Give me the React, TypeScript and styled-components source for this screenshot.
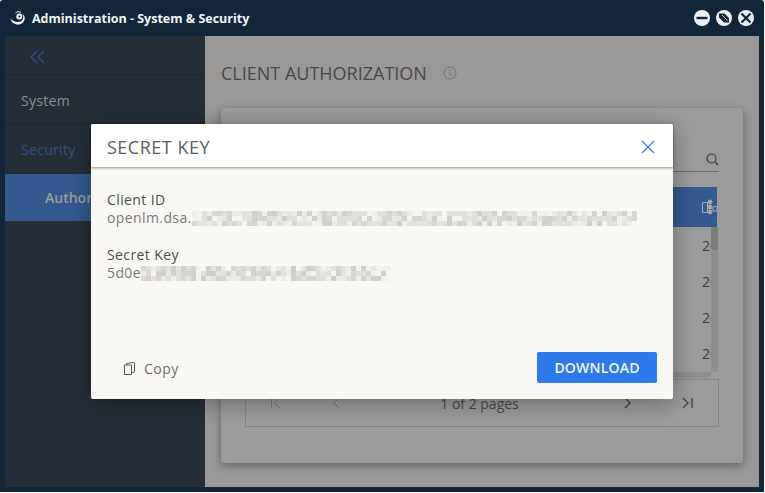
import styled, { createGlobalStyle } from 'styled-components'

const GlobalStyle = createGlobalStyle`
  html, body {
    margin: 0;
    padding: 0;
    background: #f4f4f4;
    overflow: hidden;
  }
  * { box-sizing: border-box; }
`

const Window = styled.div`
  position: relative;
  width: 764px;
  height: 492px;
  background: #12263a;
  border-radius: 3px 3px 0 0;
  padding: 0 5px 5px 5px;
  display: flex;
  flex-direction: column;
  font-family: 'Open Sans', sans-serif;
  overflow: hidden;
`

const TitleBar = styled.header`
  height: 36px;
  flex: none;
  display: flex;
  align-items: center;
  margin: 0 -5px;
  padding: 0 10px;
  color: #f3f5f7;
`

const Logo = styled.svg`
  width: 16px;
  height: 16px;
  margin-right: 6px;
`

const Title = styled.h1`
  margin: 0;
  flex: 1;
  font: 700 12.5px 'Open Sans', sans-serif;
`

const WinButtons = styled.div`
  display: flex;
  gap: 6px;
`

const WinButton = styled.svg`
  width: 16px;
  height: 16px;
`

const Body = styled.div`
  flex: 1;
  display: flex;
  min-height: 0;
`

const Sidebar = styled.nav`
  width: 200px;
  flex: none;
  background: #252e37;
  display: flex;
  flex-direction: column;
  font-size: 14px;
  letter-spacing: 0.3px;
`

const Collapse = styled.div`
  height: 39px;
  padding: 13px 0 0 24px;
  border-bottom: 1px solid #20272e;
`

const NavItem = styled.div<{ $active?: boolean }>`
  height: 49px;
  display: flex;
  align-items: center;
  padding: 2px 0 0 16px;
  color: ${p => (p.$active ? '#2f5185' : '#8b8f93')};
  border-bottom: 1px solid #1f262c;
`

const SubItem = styled.div`
  height: 47px;
  margin-top: 1px;
  display: flex;
  align-items: center;
  padding-left: 40px;
  background: #34598f;
  color: #9c9c9c;
  font-weight: 600;
  letter-spacing: 0;
`

const Content = styled.main`
  flex: 1;
  min-width: 0;
  background: #9b9997;
  padding: 24px 16px;
  display: flex;
  flex-direction: column;
`

const Heading = styled.h2`
  margin: 0 0 22px;
  height: 26px;
  flex: none;
  display: flex;
  align-items: center;
  gap: 16px;
  font-size: 18px;
  font-weight: 400;
  color: #46484b;
`

const Card = styled.section`
  height: 355px;
  flex: none;
  background: #9b9b9b;
  border-radius: 3px;
  box-shadow: 0 3px 10px rgba(0, 0, 0, 0.35);
  padding: 0 24px;
  display: flex;
  flex-direction: column;
`

const SearchRow = styled.div`
  height: 64px;
  flex: none;
  border-bottom: 1px solid #6f6f6f;
  display: flex;
  align-items: flex-end;
  justify-content: flex-end;
  padding-bottom: 5px;
`

const TableBox = styled.div`
  position: relative;
  height: 193px;
  flex: none;
  margin-top: 14px;
  padding: 1px 2px 0 0;
  overflow: hidden;
`

const Row = styled.div<{ $selected?: boolean }>`
  height: ${p => (p.$selected ? 40 : 36)}px;
  display: flex;
  align-items: center;
  justify-content: flex-end;
  font-size: 14px;
  color: #3f3f3f;
  padding-right: ${p => (p.$selected ? 0 : 5)}px;
  background: ${p => (p.$selected ? '#34598f' : 'transparent')};
`

const RowCell = styled.span`
  width: 10px;
  overflow: hidden;
  white-space: nowrap;
`

const VScroll = styled.div`
  position: absolute;
  right: 1px;
  top: 41px;
  width: 7px;
  height: 145px;
  background: #8f8f8f;
  border-radius: 3px;
`

const VThumb = styled.div`
  height: 23px;
  background: #7c7c7c;
  border-radius: 3px;
`

const HScroll = styled.div`
  position: absolute;
  left: 0;
  right: 8px;
  bottom: 1px;
  height: 6px;
  background: #8f8f8f;
  border-radius: 3px;
`

const Pager = styled.div`
  height: 48px;
  flex: none;
  position: relative;
  border: 1px solid #858585;
  display: flex;
  align-items: center;
  padding: 0 24px;
  gap: 49px;
  font-size: 14px;
`

const PagerText = styled.span`
  position: absolute;
  left: 0;
  right: 0;
  text-align: center;
  padding-right: 5px;
  color: #4a4a4a;
`

const PagerSpacer = styled.div`
  flex: 1;
`

const Modal = styled.div`
  position: absolute;
  left: 91px;
  top: 124px;
  width: 582px;
  height: 275px;
  background: #f9f8f4;
  border-radius: 2px;
  box-shadow: 0 4px 22px rgba(0, 0, 0, 0.32);
  display: flex;
  flex-direction: column;
`

const ModalHeader = styled.div`
  height: 43px;
  flex: none;
  background: #fff;
  border-radius: 2px 2px 0 0;
  box-shadow: 0 1px 3px rgba(0, 0, 0, 0.45);
  display: flex;
  align-items: center;
  justify-content: space-between;
  padding: 2px 18px 0 16px;
  font-size: 18px;
  letter-spacing: 0.5px;
  color: #5a5d61;
`

const ModalBody = styled.div`
  flex: 1;
  padding: 24px 16px 0;
  font-size: 14px;
  line-height: 18px;
  letter-spacing: 0.4px;
`

const Field = styled.div`
  margin-bottom: 19px;
`

const Label = styled.div`
  color: #4d4f52;
`

const Value = styled.div`
  display: flex;
  align-items: center;
  color: #77797b;
`

const Blur = styled.div`
  display: flex;
  flex-direction: column;
  filter: blur(0.5px);
`

const BlurRow = styled.div`
  display: flex;
`

const BlurCell = styled.i`
  width: 5px;
  height: 5px;
`

const ModalFooter = styled.div`
  height: 47px;
  flex: none;
  display: flex;
  align-items: flex-start;
  justify-content: space-between;
  padding: 0 16px 0 33px;
`

const CopyButton = styled.button`
  height: 32px;
  border: 0;
  background: none;
  padding: 0;
  display: flex;
  align-items: center;
  gap: 9px;
  font: 14px 'Open Sans', sans-serif;
  letter-spacing: 0.5px;
  color: #6b6d70;
`

const DownloadButton = styled.button`
  width: 120px;
  height: 31px;
  border: 0;
  border-radius: 2px;
  background: #2f7aeb;
  color: #f2f6fd;
  font: 600 14px 'Open Sans', sans-serif;
  letter-spacing: 0.2px;
`

const shades = ['#e6e4e0', '#d9d7d3', '#f0efeb', '#d2d0cc', '#eaeae7', '#dfe1e0', '#f5f4f0', '#d6d2ce', '#e2e0dc']

// pseudo random pixels so that the masked text does not look like a regular pattern
function pixel(i: number, row: number, seed: number) {
  const n = Math.sin(i * 12.9898 + row * 78.233 + seed * 37.719) * 43758.5453
  return shades[Math.floor((n - Math.floor(n)) * shades.length)]
}

function BlurStrip({ cells, seed }: { cells: number; seed: number }) {
  return (
    <Blur>
      {[0, 1, 2].map(row => (
        <BlurRow key={row}>
          {Array.from({ length: cells }, (_, i) => (
            <BlurCell key={i} style={{ background: pixel(i, row, seed) }} />
          ))}
        </BlurRow>
      ))}
    </Blur>
  )
}

export default function App() {
  return (
    <Window>
      <GlobalStyle />
      <TitleBar>
        <Logo viewBox="0 0 16 16">
          <path d="M.5 8.500C1 12 4 14.500 8 14.500c3.800 0 6.500-2.600 6.700-6 .1-2-.8-4-2.700-5 1.200 1.400 1.700 3.400 1 5.200-.7 2-2.700 3.300-5 3.300-3 0-5.800-1.300-7.500-3.500z" fill="#f3f5f7" />
          <circle cx="9.300" cy="6.600" r="3" fill="#f3f5f7" />
          <circle cx="9.300" cy="6.600" r="1" fill="#12263a" />
          <path d="M5.500 2.800C7 1.500 9.500 1.500 11 2.500" fill="none" stroke="#f3f5f7" />
        </Logo>
        <Title>Administration - System &amp; Security</Title>
        <WinButtons>
          <WinButton viewBox="0 0 16 16">
            <circle cx="8" cy="8" r="8" fill="#edf0f3" />
            <rect x="2.500" y="6.800" width="11" height="2.400" fill="#12263a" />
          </WinButton>
          <WinButton viewBox="0 0 16 16">
            <circle cx="8" cy="8" r="8" fill="#edf0f3" />
            <path d="M3 3.500h5.500L13 8v4.500H8L3 7.500z" fill="#12263a" />
            <path d="M6 5l5.500 5.500" stroke="#edf0f3" strokeWidth="0.800" />
          </WinButton>
          <WinButton viewBox="0 0 16 16">
            <circle cx="8" cy="8" r="8" fill="#edf0f3" />
            <path d="M3.500 3.500l9 9M12.500 3.500l-9 9" stroke="#12263a" strokeWidth="2.200" />
          </WinButton>
        </WinButtons>
      </TitleBar>
      <Body>
        <Sidebar>
          <Collapse>
            <svg width="16" height="14" viewBox="0 0 16 14" fill="none" stroke="#2f5185" strokeWidth="1.300">
              <path d="M8 1 2 7l6 6M15 1 9 7l6 6" />
            </svg>
          </Collapse>
          <NavItem>System</NavItem>
          <NavItem $active>Security</NavItem>
          <SubItem>Authorization</SubItem>
        </Sidebar>
        <Content>
          <Heading>
            CLIENT AUTHORIZATION
            <svg width="14" height="14" viewBox="0 0 14 14" fill="none" stroke="#777">
              <circle cx="7" cy="7" r="6" />
              <path d="M7 6v4M7 4v1" />
            </svg>
          </Heading>
          <Card>
            <SearchRow>
              <svg width="13" height="13" viewBox="0 0 13 13" fill="none" stroke="#3f3f3f" strokeWidth="1.200">
                <circle cx="5.500" cy="5.500" r="4.500" />
                <path d="M9 9l3 3" />
              </svg>
            </SearchRow>
            <TableBox>
              <Row $selected>
                <svg width="15" height="16" viewBox="0 0 15 16" fill="none" stroke="#a9a9a9">
                  <path d="M.5 3.500h5v10h-5z" />
                  <circle cx="8" cy="3" r="2" fill="#a9a9a9" />
                  <circle cx="8" cy="8" r="2" fill="#a9a9a9" />
                  <circle cx="8" cy="13" r="2" fill="#a9a9a9" />
                  <path d="M11 8a3 3 0 0 1 4 0v4h-4z" />
                </svg>
              </Row>
              <Row><RowCell>2021</RowCell></Row>
              <Row><RowCell>2021</RowCell></Row>
              <Row><RowCell>2021</RowCell></Row>
              <Row><RowCell>2021</RowCell></Row>
              <VScroll><VThumb /></VScroll>
              <HScroll />
            </TableBox>
            <Pager>
              <PagerText>1 of 2 pages</PagerText>
              <svg width="12" height="12" viewBox="0 0 12 12" fill="none" stroke="#7a7a7a">
                <path d="M1.500 1v10M10 1 4 6l6 5" />
              </svg>
              <svg width="12" height="12" viewBox="0 0 12 12" fill="none" stroke="#7a7a7a">
                <path d="M8 1 3 6l5 5" />
              </svg>
              <PagerSpacer />
              <svg width="12" height="12" viewBox="0 0 12 12" fill="none" stroke="#3f3f3f" strokeWidth="1.300">
                <path d="M4 1l5 5-5 5" />
              </svg>
              <svg width="12" height="12" viewBox="0 0 12 12" fill="none" stroke="#3f3f3f" strokeWidth="1.300">
                <path d="M1 1l5 5-5 5M10 1v10" />
              </svg>
            </Pager>
          </Card>
        </Content>
      </Body>
      <Modal>
        <ModalHeader>
          SECRET KEY
          <svg width="14" height="14" viewBox="0 0 14 14" fill="none" stroke="#2f7aeb" strokeWidth="1.100">
            <path d="M1 1l12 12M13 1 1 13" />
          </svg>
        </ModalHeader>
        <ModalBody>
          <Field>
            <Label>Client ID</Label>
            <Value>
              openlm.dsa.
              <BlurStrip cells={89} seed={3} />
            </Value>
          </Field>
          <Field>
            <Label>Secret Key</Label>
            <Value>
              5d0e
              <BlurStrip cells={50} seed={5} />
            </Value>
          </Field>
        </ModalBody>
        <ModalFooter>
          <CopyButton>
            <svg width="11" height="13" viewBox="0 0 11 13" fill="none" stroke="#55585c">
              <path d="M.5 3h7v9.500h-7zM2.500 3V1.500l7-1 1 .5v9l-3 .5" />
            </svg>
            Copy
          </CopyButton>
          <DownloadButton>DOWNLOAD</DownloadButton>
        </ModalFooter>
      </Modal>
    </Window>
  )
}
